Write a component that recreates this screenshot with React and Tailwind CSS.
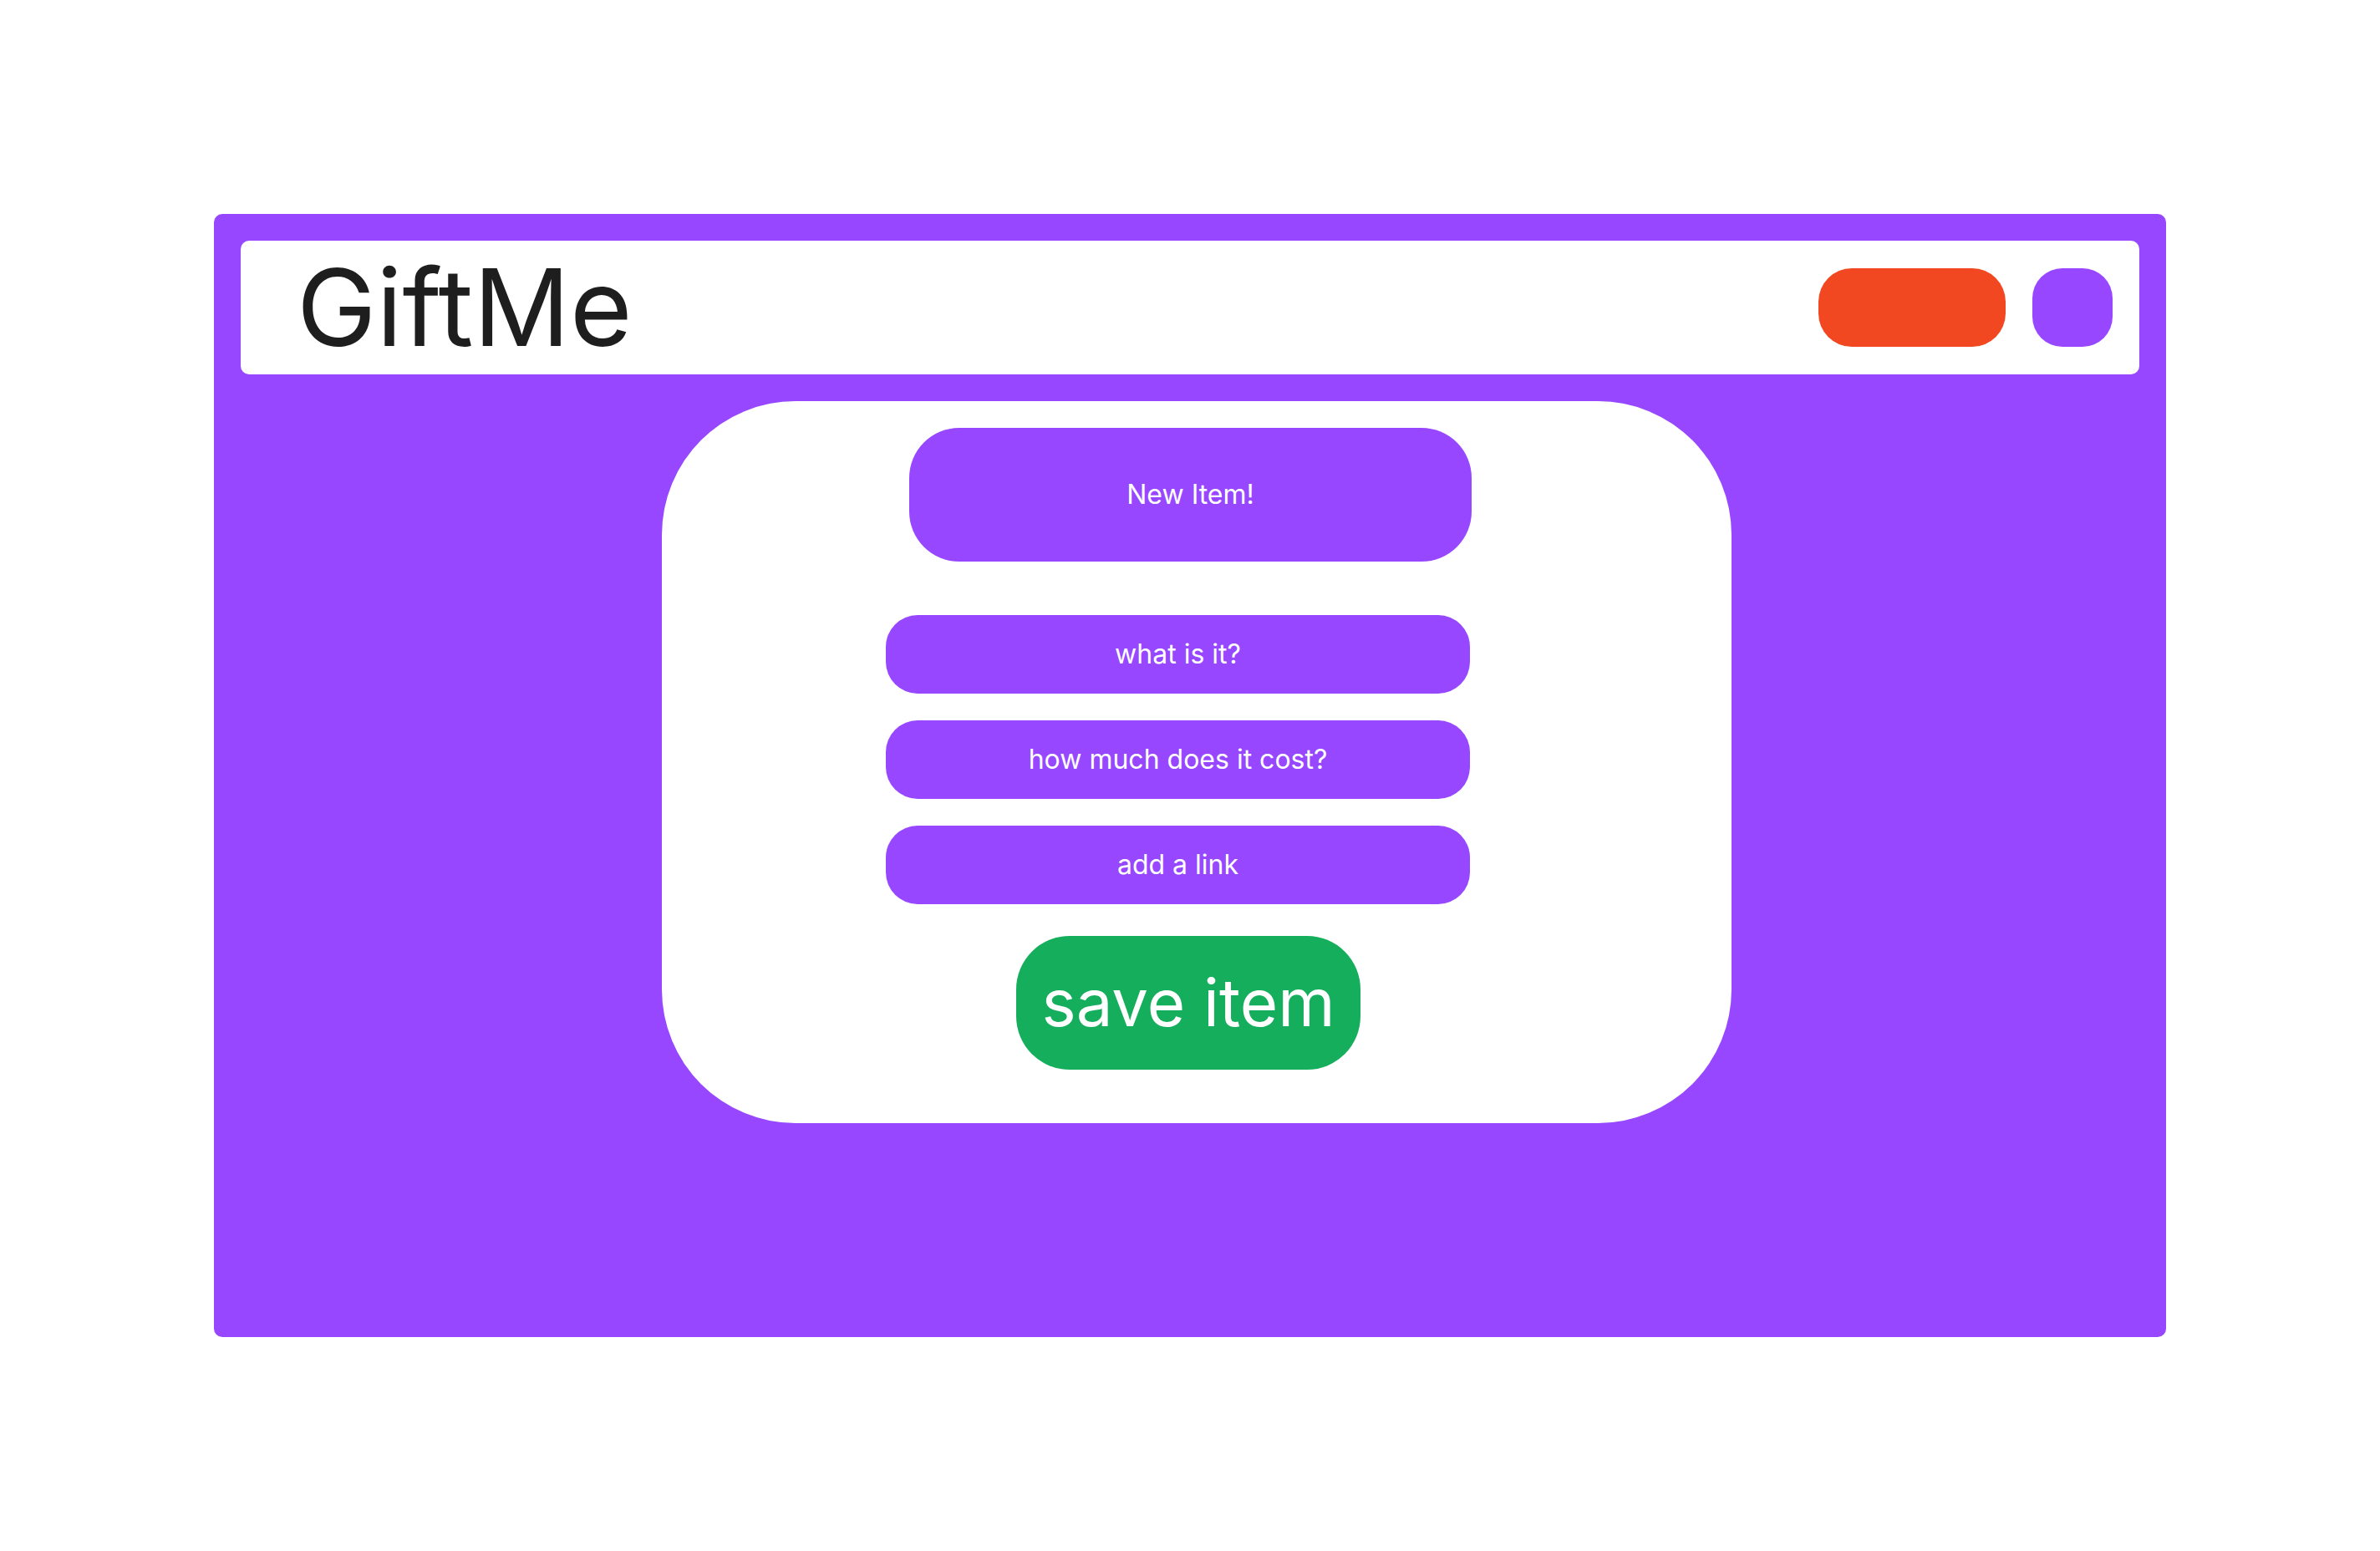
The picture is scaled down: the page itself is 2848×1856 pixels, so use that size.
import React from "react";

const fields = ["what is it?", "how much does it cost?", "add a link"];

const App = () => {
  return (
    <div className="w-[2848px] h-[1856px] bg-white pt-[256px] pl-[256px] font-['Inter',sans-serif]">
      <div className="w-[2336px] h-[1344px] bg-[#9747ff] rounded-[10px] pt-[32px] px-[32px] flex flex-col">
        {/* top bar */}
        <header className="h-[160px] bg-white rounded-[10px] flex items-center justify-between pl-[67px] pr-[32px]">
          <h1 className="text-[128px] leading-none text-[#1e1e1e] font-normal">GiftMe</h1>
          <div className="flex items-center gap-[32px]">
            <button className="w-[224px] h-[94px] rounded-[40px] bg-[#f24822]" />
            <button className="w-[96px] h-[94px] rounded-[36px] bg-[#9747ff]" />
          </div>
        </header>

        {/* new item card */}
        <div className="mt-[32px] ml-[504px] w-[1280px] h-[864px] bg-white rounded-[160px] flex flex-col pt-[32px]">
          <div className="ml-[296px] w-[673px] h-[160px] rounded-[60px] bg-[#9747ff] flex items-center justify-center text-white text-[32px]">
            New Item!
          </div>
          <div className="ml-[268px] mt-[64px] w-[699px] flex flex-col gap-[32px]">
            {fields.map((f) => (
              <div
                key={f}
                className="h-[94px] rounded-[38px] bg-[#9747ff] flex items-center justify-center text-white text-[32px]"
              >
                {f}
              </div>
            ))}
          </div>
          <button className="ml-[424px] mt-[38px] w-[412px] h-[160px] rounded-[64px] bg-[#14ae5c] text-white text-[78px] leading-none flex items-center justify-center">
            save item
          </button>
        </div>
      </div>
    </div>
  );
};

export default App;
